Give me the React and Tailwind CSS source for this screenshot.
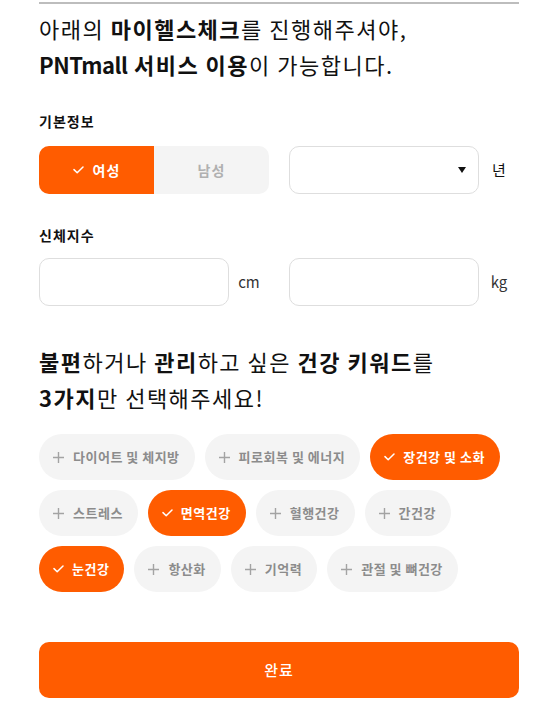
import React from "react";

const F = "font-['Noto_Sans_CJK_KR',sans-serif]";

function Check({ className = "" }) {
  return (
    <svg width="11" height="8" viewBox="0 0 11 8" className={className} fill="none">
      <path d="M1 3.6 L4.2 6.8 L10 1" stroke="currentColor" strokeWidth="1.5" strokeLinecap="round" strokeLinejoin="round" />
    </svg>
  );
}

function Plus() {
  return (
    <svg width="11" height="11" viewBox="0 0 11 11" fill="none" className="text-[#a3a3a3]">
      <path d="M5.5 0 V11 M0 5.5 H11" stroke="currentColor" strokeWidth="1.4" />
    </svg>
  );
}

const chips = [
  ["다이어트 및 체지방", false],
  ["피로회복 및 에너지", false],
  ["장건강 및 소화", true],
  ["스트레스", false],
  ["면역건강", true],
  ["혈행건강", false],
  ["간건강", false],
  ["눈건강", true],
  ["항산화", false],
  ["기억력", false],
  ["관절 및 뼈건강", false],
];

function Chip({ label, on }) {
  if (on) {
    return (
      <div className="flex h-[46px] items-center gap-[8px] rounded-full bg-[#ff5c00] pl-[14px] pr-[15px] text-[13px] font-bold tracking-[0.5px] text-white">
        <Check />
        <span>{label}</span>
      </div>
    );
  }
  return (
    <div className="flex h-[46px] items-center gap-[9px] rounded-full bg-[#f4f4f4] pl-[14px] pr-[15px] text-[13px] font-semibold tracking-[0.5px] text-[#8c8c8c]">
      <Plus />
      <span>{label}</span>
    </div>
  );
}

export default function App() {
  return (
    <div className={`${F} min-h-[715px] w-[543px] bg-white pl-[39px] pr-[24px] text-[#111]`}>
      <div className="h-[2px] translate-y-[2px] bg-[#bdbdbd]" />
      <h2 className="mt-[8px] text-[22px] font-normal leading-[36px] tracking-[1.5px]">
        아래의 <b className="font-bold">마이헬스체크</b>를 진행해주셔야,
        <br />
        <b className="font-bold">
          <span className="tracking-[-0.5px]">PNTmall</span> 서비스 이용
        </b>
        이 가능합니다.
      </h2>

      <div className="mt-[28px] text-[14px] font-bold leading-[22px] tracking-[1px]">기본정보</div>
      <div className="mt-[14px] grid grid-cols-2 gap-[20px]">
        <div className="flex h-[48px] overflow-hidden rounded-[10px] bg-[#f4f4f4]">
          <div className="flex flex-1 items-center justify-center gap-[9px] bg-[#ff5c00] text-[14px] font-bold tracking-[1px] text-white">
            <Check />
            <span>여성</span>
          </div>
          <div className="flex flex-1 items-center justify-center text-[14px] font-semibold tracking-[1px] text-[#b0b0b0]">남성</div>
        </div>
        <div className="flex items-center">
          <div className="flex h-[48px] w-[190px] items-center justify-end rounded-[10px] border border-[#dedede] pr-[12px]">
            <svg width="8" height="6" viewBox="0 0 8 6">
              <path d="M0 0 H8 L4 6 Z" fill="#111" />
            </svg>
          </div>
          <span className="flex-1 text-center text-[15px]">년</span>
        </div>
      </div>

      <div className="mt-[30px] text-[14px] font-bold leading-[22px] tracking-[1px]">신체지수</div>
      <div className="mt-[12px] grid grid-cols-2 gap-[20px]">
        <div className="flex items-center">
          <div className="h-[48px] w-[190px] rounded-[10px] border border-[#dedede]" />
          <span className="flex-1 text-center text-[15px] text-[#333]">cm</span>
        </div>
        <div className="flex items-center">
          <div className="h-[48px] w-[190px] rounded-[10px] border border-[#dedede]" />
          <span className="flex-1 text-center text-[15px] text-[#333]">kg</span>
        </div>
      </div>

      <h2 className="mt-[37px] text-[22px] font-normal leading-[36px] tracking-[1.5px]">
        <b className="font-bold">불편</b>하거나 <b className="font-bold">관리</b>하고 싶은{" "}
        <b className="font-bold">건강 키워드</b>를
        <br />
        <b className="font-bold">3가지</b>만 선택해주세요!
      </h2>

      <div className="mt-[19px] flex flex-wrap gap-[10px]">
        {chips.map(([l, on]) => (
          <Chip key={l} label={l} on={on} />
        ))}
      </div>

      <button className="mt-[50px] flex h-[56px] w-full items-center justify-center rounded-[10px] bg-[#ff5c00] text-[15px] font-medium tracking-[1px] text-white">
        완료
      </button>
    </div>
  );
}
